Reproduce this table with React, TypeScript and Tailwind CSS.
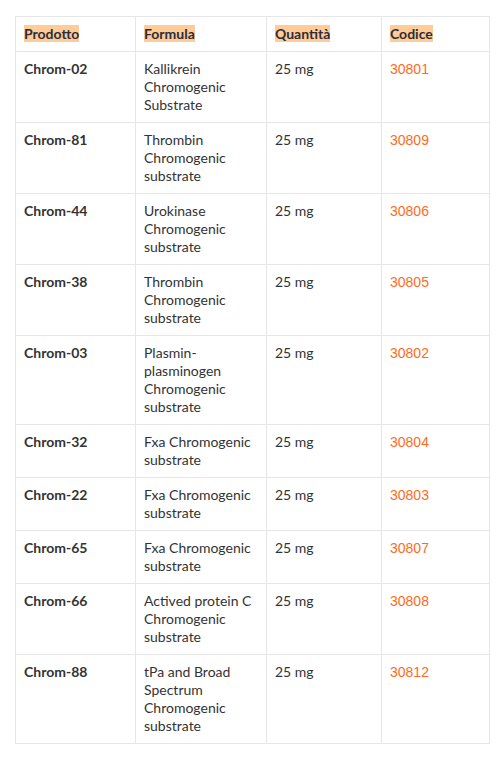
const rows = [
  { name: "Chrom-02", formula: ["Kallikrein", "Chromogenic", "Substrate"], code: "30801" },
  { name: "Chrom-81", formula: ["Thrombin", "Chromogenic", "substrate"], code: "30809" },
  { name: "Chrom-44", formula: ["Urokinase", "Chromogenic", "substrate"], code: "30806" },
  { name: "Chrom-38", formula: ["Thrombin", "Chromogenic", "substrate"], code: "30805" },
  { name: "Chrom-03", formula: ["Plasmin-", "plasminogen", "Chromogenic", "substrate"], code: "30802" },
  { name: "Chrom-32", formula: ["Fxa Chromogenic", "substrate"], code: "30804" },
  { name: "Chrom-22", formula: ["Fxa Chromogenic", "substrate"], code: "30803" },
  { name: "Chrom-65", formula: ["Fxa Chromogenic", "substrate"], code: "30807" },
  { name: "Chrom-66", formula: ["Actived protein C", "Chromogenic", "substrate"], code: "30808" },
  { name: "Chrom-88", formula: ["tPa and Broad", "Spectrum", "Chromogenic", "substrate"], code: "30812" },
];

const headers = ["Prodotto", "Formula", "Quantità", "Codice"];
const widths = ["w-[120px]", "w-[131px]", "w-[115px]", "w-[108px]"];

export default function App() {
  return (
    <div className="min-h-screen bg-white pt-4 pl-[15px] font-['Lato',sans-serif] text-[14px] leading-[18px] text-[#333]">
      <table className="w-[474px] table-fixed border-collapse border border-[#e6e6e6]">
        <thead>
          <tr>
            {headers.map((h, i) => (
              <th
                key={h}
                className={`${widths[i]} border border-[#e6e6e6] px-2 py-2 text-left align-top font-bold text-[#2d2d3a]`}
              >
                <span className="bg-[#ffcb96]">{h}</span>
              </th>
            ))}
          </tr>
        </thead>
        <tbody>
          {rows.map((r) => (
            <tr key={r.name}>
              <td className="border border-[#e6e6e6] px-2 py-2 align-top font-bold">{r.name}</td>
              <td className="border border-[#e6e6e6] px-2 py-2 align-top">
                {r.formula.map((line, i) => (
                  <div key={i}>{line}</div>
                ))}
              </td>
              <td className="border border-[#e6e6e6] px-2 py-2 align-top">25 mg</td>
              <td className="border border-[#e6e6e6] px-2 py-2 align-top font-['Liberation_Sans',sans-serif] text-[#ff6b1c]">
                {r.code}
              </td>
            </tr>
          ))}
        </tbody>
      </table>
    </div>
  );
}
